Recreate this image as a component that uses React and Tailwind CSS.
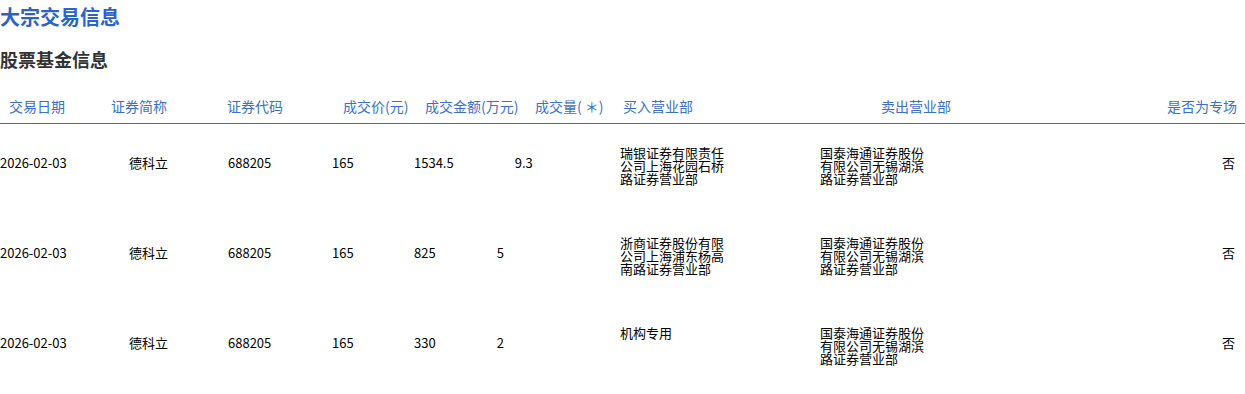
const rows = [
	{
		date: "2026-02-03",
		name: "德科立",
		code: "688205",
		price: "165",
		amount: "1534.5",
		volume: "9.3",
		buyer: "瑞银证券有限责任公司上海花园石桥路证券营业部",
		seller: "国泰海通证券股份有限公司无锡湖滨路证券营业部",
		special: "否",
	},
	{
		date: "2026-02-03",
		name: "德科立",
		code: "688205",
		price: "165",
		amount: "825",
		volume: "5",
		buyer: "浙商证券股份有限公司上海浦东杨高南路证券营业部",
		seller: "国泰海通证券股份有限公司无锡湖滨路证券营业部",
		special: "否",
	},
	{
		date: "2026-02-03",
		name: "德科立",
		code: "688205",
		price: "165",
		amount: "330",
		volume: "2",
		buyer: "机构专用",
		seller: "国泰海通证券股份有限公司无锡湖滨路证券营业部",
		special: "否",
	},
];

const App = () => {
	return (
		<div className="w-[1245px] h-[394px] bg-white overflow-hidden font-['Noto_Sans_CJK_SC',sans-serif]">
			{/* Titles */}
			<h1 className="pt-[4px] text-[20px] leading-[26px] font-bold text-[#2a64c5]">大宗交易信息</h1>
			<h2 className="mt-[18px] text-[18px] leading-[22px] font-bold text-[#333333]">股票基金信息</h2>

			{/* Header */}
			<div className="mt-[20px] flex items-start pt-[6px] h-[34px] text-[14px] leading-[20px] text-[#3a70c8] border-b border-[#3a6cc0]">
				<div className="w-[111px] pl-[9px]">交易日期</div>
				<div className="w-[116px]">证券简称</div>
				<div className="w-[116px]">证券代码</div>
				<div className="w-[82px]">成交价(元)</div>
				<div className="w-[110px]">成交金额(万元)</div>
				<div className="w-[88px]">成交量( ＊)</div>
				<div className="w-[258px]">买入营业部</div>
				<div className="flex-1">卖出营业部</div>
				<div className="pr-[8px]">是否为专场</div>
			</div>

			{/* Rows */}
			{rows.map((r, i) => (
				<div key={i} className="flex items-start h-[90px] text-[13px] leading-[13px] text-black">
					<div className="w-[88px] mt-[32px]">{r.date}</div>
					<div className="w-[80px] mt-[32px] text-right">{r.name}</div>
					<div className="w-[164px] mt-[32px] pl-[60px]">{r.code}</div>
					<div className="w-[82px] mt-[32px]">{r.price}</div>
					<div className="w-[206px] mt-[32px] flex gap-[61px]">
						<span>{r.amount}</span>
						<span>{r.volume}</span>
					</div>
					<div className="w-[200px] mt-[22px]">
						<div className="w-[104px] break-all">{r.buyer}</div>
					</div>
					<div className="flex-1 mt-[22px]">
						<div className="w-[104px] break-all">{r.seller}</div>
					</div>
					<div className="mt-[32px] pr-[10px]">{r.special}</div>
				</div>
			))}
		</div>
	);
};

export default App;
